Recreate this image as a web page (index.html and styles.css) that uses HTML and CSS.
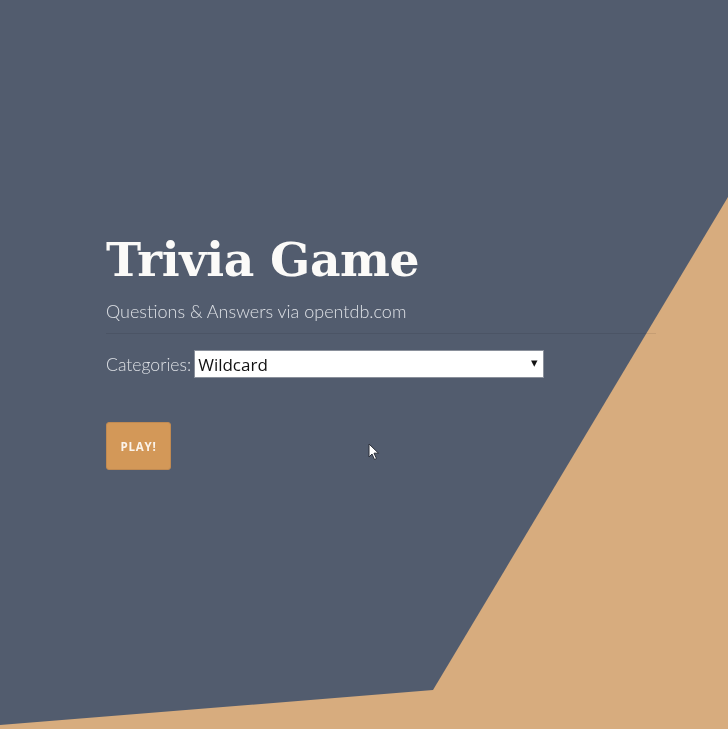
FILE: index.html
```html
<!DOCTYPE html>
<html lang="en">
  <head>
    <meta charset="UTF-8" />
    <meta name="viewport" content="width=device-width, initial-scale=1.0" />
    <title>Trivia Game</title>
    <link rel="stylesheet" href="styles.css">
  </head>
  <body>
    <div class="backdrop"></div>
    <div class="container">
      <h1>Trivia Game</h1>
      <p class="subtitle">Questions &amp; Answers via opentdb.com</p>
      <hr />

      <!-- Category picker -->
      <form id="startForm">
        <div class="field">
          <label for="category">Categories:</label>
          <div class="select-wrap">
            <select id="category">
              <option value="">Wildcard</option>
              <option value="9">General Knowledge</option>
              <option value="17">Science &amp; Nature</option>
              <option value="23">History</option>
            </select>
          </div>
        </div>
        <button type="submit" class="play">Play!</button>
      </form>
    </div>

    <!-- mouse pointer -->
    <svg class="pointer" width="12" height="18" viewBox="0 0 12 18">
      <path d="M1 1 L1 14 L4 11 L6.5 16.5 L8.5 15.5 L6 10.2 L10.5 10.2 Z" fill="#fff" stroke="#2b2f38" stroke-width="1" stroke-linejoin="round" />
    </svg>
  </body>
</html>
```

FILE: styles.css
```css
html,
body {
  height: 100%;
}

body {
  margin: 0;
  padding: 0;
  background-color: #d7ac7e;
  font-family: Lato, "Open Sans", sans-serif;
  color: #dfe2e7;
  overflow: hidden;
}

/* slate panel with the angled tan corner */
.backdrop {
  position: fixed;
  inset: 0;
  background-color: #525c6e;
  clip-path: polygon(0 0, 100% 0, 100% 197px, 433px 690px, 0 725px);
  z-index: 0;
}

.container {
  position: relative;
  z-index: 1;
  width: 550px;
  margin: 0 0 0 106px;
  padding-top: 230px;
}

h1 {
  margin: 0;
  font-family: "DejaVu Serif", serif;
  font-weight: bold;
  font-size: 47.2px;
  line-height: 60px;
  letter-spacing: -0.4px;
  color: #fbfaf8;
}

.subtitle {
  margin: 9px 0 0;
  font-weight: 300;
  font-size: 18px;
  line-height: 24px;
  color: #dde0e5;
}

hr {
  margin: 10px 0 0;
  border: 0;
  border-top: 1px solid rgba(0, 0, 0, 0.08);
}

form {
  margin-top: 16px;
}

.field {
  display: flex;
  align-items: center;
  gap: 3px;
}

.field label {
  font-weight: 300;
  font-size: 17.6px;
  color: #dde0e5;
}

.select-wrap {
  position: relative;
}

.select-wrap::after {
  content: "\25BE";
  position: absolute;
  right: 6px;
  top: 4px;
  font-size: 13px;
  color: #111;
  pointer-events: none;
}

select {
  appearance: none;
  -webkit-appearance: none;
  width: 350px;
  height: 28px;
  padding: 0 20px 0 3px;
  font-family: "Open Sans", sans-serif;
  font-size: 17px;
  color: #111;
  background: #fff;
  border: 1px solid #8a909b;
  border-radius: 0;
}

.play {
  margin-top: 44px;
  width: 65px;
  height: 48px;
  padding: 0;
  font-family: "Open Sans", sans-serif;
  font-weight: bold;
  font-size: 11.5px;
  letter-spacing: 0.8px;
  text-transform: uppercase;
  color: #fbf3ea;
  background-color: #d39858;
  border: 1px solid #c08a52;
  border-radius: 3px;
  cursor: pointer;
}

.play:hover {
  background-color: #c98c4c;
}

.pointer {
  position: fixed;
  left: 368px;
  top: 443px;
  z-index: 2;
}
```
